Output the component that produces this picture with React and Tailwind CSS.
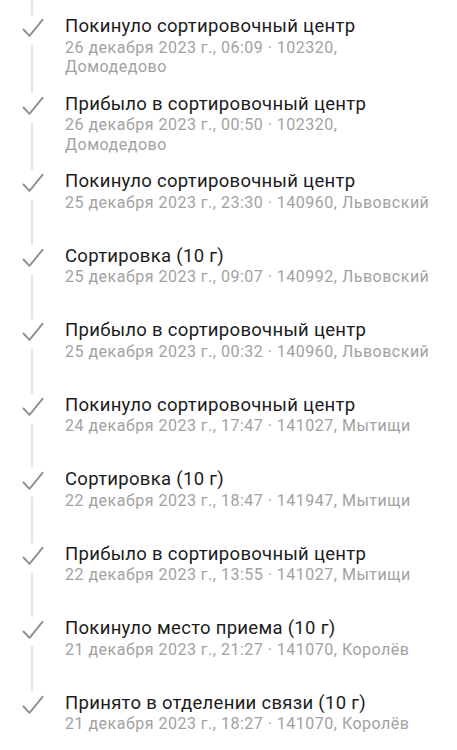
import React from "react";

const events = [
  { title: "Покинуло сортировочный центр", meta: "26 декабря 2023 г., 06:09 · 102320, Домодедово" },
  { title: "Прибыло в сортировочный центр", meta: "26 декабря 2023 г., 00:50 · 102320, Домодедово" },
  { title: "Покинуло сортировочный центр", meta: "25 декабря 2023 г., 23:30 · 140960, Львовский" },
  { title: "Сортировка (10 г)", meta: "25 декабря 2023 г., 09:07 · 140992, Львовский" },
  { title: "Прибыло в сортировочный центр", meta: "25 декабря 2023 г., 00:32 · 140960, Львовский" },
  { title: "Покинуло сортировочный центр", meta: "24 декабря 2023 г., 17:47 · 141027, Мытищи" },
  { title: "Сортировка (10 г)", meta: "22 декабря 2023 г., 18:47 · 141947, Мытищи" },
  { title: "Прибыло в сортировочный центр", meta: "22 декабря 2023 г., 13:55 · 141027, Мытищи" },
  { title: "Покинуло место приема (10 г)", meta: "21 декабря 2023 г., 21:27 · 141070, Королёв" },
  { title: "Принято в отделении связи (10 г)", meta: "21 декабря 2023 г., 18:27 · 141070, Королёв" },
];

function Check() {
  return (
    <svg width="24" height="24" viewBox="0 0 24 24" className="ml-[20px] shrink-0">
      <path
        d="M3.5 14.5 L9.5 20.8 L22.5 4.8"
        fill="none"
        stroke="#8f8f8f"
        strokeWidth="1.9"
        strokeLinecap="round"
        strokeLinejoin="round"
      />
    </svg>
  );
}

function TrackRow({ event, last }) {
  return (
    <div className="flex min-h-[74.5px]">
      <div className="w-[65px] shrink-0 flex flex-col">
        <Check />
        {!last && <div className="mt-[5px] ml-[31px] w-[2px] flex-1 bg-[#e4e4e4]" />}
      </div>
      <div className="flex-1 pb-4 pr-[20px]">
        <div className="text-[18.5px] leading-[22px] tracking-[0.3px] text-[#1c1c1c]">{event.title}</div>
        <div className="mt-[0.5px] text-[16px] leading-[19.5px] tracking-[0.5px] text-[#a2a2a2]">{event.meta}</div>
      </div>
    </div>
  );
}

export default function App() {
  return (
    <div className="w-[457px] h-[750px] overflow-hidden bg-white" style={{ fontFamily: "Roboto, 'Noto Sans', sans-serif" }}>
      <div className="flex h-[15px]">
        <div className="ml-[31px] w-[2px] bg-[#e4e4e4]" />
      </div>
      {events.map((e, i) => (
        <TrackRow key={i} event={e} last={i === events.length - 1} />
      ))}
    </div>
  );
}
